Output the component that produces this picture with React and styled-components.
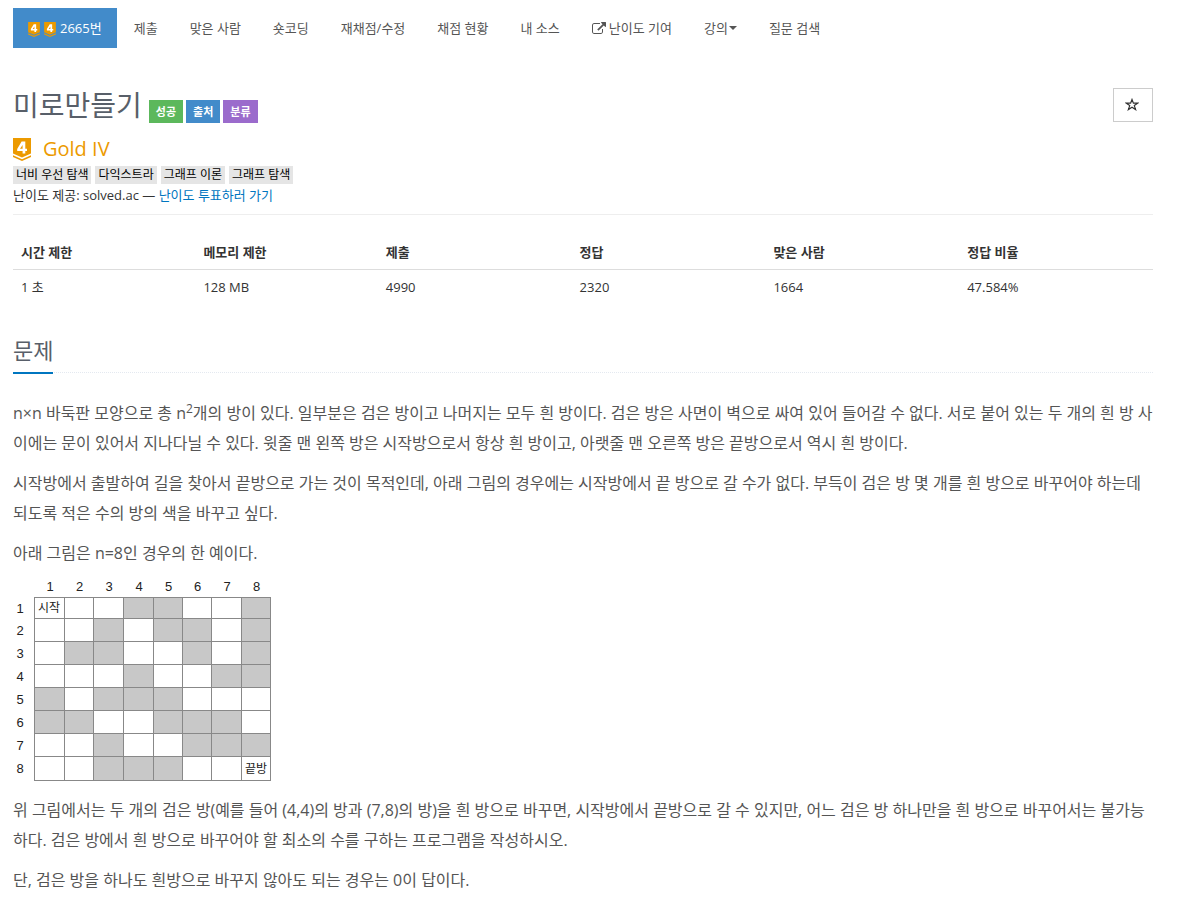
import React from 'react';
import styled, { createGlobalStyle } from 'styled-components';

const GlobalStyle = createGlobalStyle`
  *, *::before, *::after { box-sizing: border-box; }
  body {
    margin: 0;
    background: #fff;
    color: #333;
    font: 13px/20px "Open Sans", "Noto Sans CJK KR", sans-serif;
  }
  a { text-decoration: none; color: inherit; }
`;

const Page = styled.main`
  padding: 8px 24px 0 13px;
`;

const Nav = styled.nav`
  display: flex;
  flex-wrap: wrap;
  gap: 2px;
`;

const NavLink = styled.a`
  display: flex;
  align-items: center;
  gap: ${(p) => p.$gap || 3}px;
  padding: 10px 15px;
  white-space: nowrap;
  color: ${(p) => (p.$active ? '#fff' : '#555')};
  background: ${(p) => (p.$active ? '#428bca' : 'transparent')};
`;

const Badges = styled.span`
  display: flex;
  gap: 4px;
  padding-top: 2px;
`;

const Caret = styled.span`
  border: 4px solid transparent;
  border-top-color: currentColor;
  border-bottom: 0;
`;

const Header = styled.header`
  display: flex;
  justify-content: space-between;
  align-items: flex-start;
  margin-top: 40px;
`;

const TitleRow = styled.div`
  display: flex;
  align-items: flex-end;
  gap: 7px;
`;

const Title = styled.h1`
  margin: 0;
  font-size: 28px;
  line-height: 35px;
  font-weight: 400;
  color: #585f69;
`;

const Labels = styled.div`
  display: flex;
  gap: 3px;
`;

const Label = styled.span`
  padding: 2px 7px 1px;
  font-size: 11px;
  font-weight: 700;
  color: #fff;
  background: ${(p) => p.$color};
`;

const StarButton = styled.button`
  display: flex;
  align-items: center;
  justify-content: center;
  width: 40px;
  height: 34px;
  padding: 0 2px 2px 0;
  color: #333;
  background: #fff;
  border: 1px solid #ccc;
`;

const Tier = styled.div`
  display: flex;
  align-items: center;
  gap: 12px;
  margin-top: 12px;
  font-size: 20px;
  line-height: 28px;
  color: #ec9a00;
`;

const Tags = styled.div`
  display: flex;
  gap: 4px;
  margin-top: 3px;
`;

const Tag = styled.a`
  padding: 0 3px;
  font-size: 12px;
  line-height: 18px;
  color: #000;
  background: #e5e5e5;
`;

const Provider = styled.p`
  margin: 1px 0 9px;
  a { color: #0076c0; }
`;

const Rule = styled.hr`
  margin: 0 0 20px;
  border: 0;
  border-top: 1px solid #eee;
`;

const InfoTable = styled.table`
  width: 100%;
  table-layout: fixed;
  border-collapse: collapse;
  line-height: 18px;
  th, td {
    width: 17%;
    padding: 8px;
    text-align: left;
  }
  th:nth-child(-n + 2) { width: 16%; }
  th { border-bottom: 1px solid #ddd; }
`;

const Headline = styled.div`
  display: flex;
  margin: 30px 0 25px;
  border-bottom: 1px dotted #e4e9f0;
`;

const HeadlineText = styled.h2`
  margin: 0 0 -2px;
  padding-bottom: 6px;
  font-size: 22px;
  line-height: 32px;
  font-weight: 400;
  color: #585f69;
  border-bottom: 2px solid #0076c0;
`;

const Body = styled.section`
  font-size: 16px;
  line-height: 30px;
  color: #555;
  p { margin: 0 0 10px; }
  sup { font-size: 12px; line-height: 0; }
`;

const Figure = styled.figure`
  margin: 0 0 13px;
  svg { display: block; }
`;

function TierIcon({ width }) {
  return (
    <svg width={width} height={Math.round((width * 23) / 18)} viewBox="0 0 18 23" role="img" aria-label="Gold IV">
      <path d="M0 0H18V15.600L9 19.600L0 15.600Z" fill="#ec9a00" />
      <path d="M0 17.200L9 21.200L18 17.200V19L9 23L0 19Z" fill="#ec9a00" />
      <path d="M8.600 3.600H12.300V10.800H14V13H12.300V15.400H9.600V13H4.200V10.900ZM9.600 10.800V6.900L7 10.800Z" fill="#fff" fillRule="evenodd" />
    </svg>
  );
}

function ExternalIcon() {
  return (
    <svg width="14" height="12" viewBox="0 0 1792 1536" fill="currentColor" aria-hidden="true">
      <path d="M1408 928v320q0 119-84.500 203.500T1120 1536H288q-119 0-203.500-84.500T0 1248V416q0-119 84.500-203.500T288 128h704q14 0 23 9t9 23v64q0 14-9 23t-23 9H288q-66 0-113 47t-47 113v832q0 66 47 113t113 47h832q66 0 113-47t47-113V928q0-14 9-23t23-9h64q14 0 23 9t9 23zm384-864v512q0 26-19 45t-45 19-45-19l-176-176-652 652q-10 10-23 10t-23-10L695 983q-10-10-10-23t10-23l652-652-176-176q-19-19-19-45t19-45 45-19h512q26 0 45 19t19 45z" />
    </svg>
  );
}

function StarIcon() {
  return (
    <svg width="14" height="13" viewBox="0 0 14 13" fill="none" stroke="currentColor" strokeWidth="1.2" aria-hidden="true">
      <path d="M7 1.500L8.400 5.200H12.600L9.300 7.600L10.600 11.600L7 9.200L3.400 11.600L4.700 7.600L1.400 5.200H5.600Z" />
    </svg>
  );
}

const MAZE = ['00011001', '00101101', '01100101', '00010011', '10111000', '11001110', '00100111', '00111000'];
const COLS = [21, 51, 80, 110, 140, 169, 198, 228, 257];
const ROWS = [19, 40, 63, 86, 109, 132, 155, 178, 202];

function Maze() {
  return (
    <svg width="260" height="204" viewBox="0 0 260 204" fontFamily='"Liberation Sans", "Noto Sans CJK KR", sans-serif' fontSize="13" textAnchor="middle" fill="#222">
      {MAZE.map((row, y) =>
        [...row].map((cell, x) => (
          <rect
            key={`${x}-${y}`}
            x={COLS[x] + 0.5}
            y={ROWS[y] + 0.5}
            width={COLS[x + 1] - COLS[x]}
            height={ROWS[y + 1] - ROWS[y]}
            fill={cell === '1' ? '#c8c8c8' : '#fff'}
            stroke="#888"
          />
        ))
      )}
      {MAZE.map((_, i) => (
        <React.Fragment key={i}>
          <text x={(COLS[i] + COLS[i + 1]) / 2 + 1} y="13">{i + 1}</text>
          <text x="7" y={(ROWS[i] + ROWS[i + 1]) / 2 + 5}>{i + 1}</text>
        </React.Fragment>
      ))}
      <text x="36" y="34" fontSize="12">시작</text>
      <text x="243" y="195" fontSize="12">끝방</text>
    </svg>
  );
}

const LINKS = ['제출', '맞은 사람', '숏코딩', '재채점/수정', '채점 현황', '내 소스'];
const TAGS = ['너비 우선 탐색', '다익스트라', '그래프 이론', '그래프 탐색'];
const INFO = [
  ['시간 제한', '1 초'],
  ['메모리 제한', '128 MB'],
  ['제출', '4990'],
  ['정답', '2320'],
  ['맞은 사람', '1664'],
  ['정답 비율', '47.584%'],
];

export default function App() {
  return (
    <>
      <GlobalStyle />
      <Page>
        <Nav>
          <NavLink href="#problem" $active $gap={4}>
            <Badges>
              <TierIcon width={12} />
              <TierIcon width={12} />
            </Badges>
            2665번
          </NavLink>
          {LINKS.map((text) => (
            <NavLink key={text} href="#nav">{text}</NavLink>
          ))}
          <NavLink href="#nav"><ExternalIcon />난이도 기여</NavLink>
          <NavLink href="#nav" $gap={1}>강의<Caret /></NavLink>
          <NavLink href="#nav">질문 검색</NavLink>
        </Nav>

        <Header>
          <TitleRow>
            <Title>미로만들기</Title>
            <Labels>
              <Label $color="#5cb85c">성공</Label>
              <Label $color="#428bca">출처</Label>
              <Label $color="#9b6bcc">분류</Label>
            </Labels>
          </TitleRow>
          <StarButton type="button" aria-label="즐겨찾기"><StarIcon /></StarButton>
        </Header>

        <Tier><TierIcon width={18} />Gold IV</Tier>
        <Tags>
          {TAGS.map((tag) => (
            <Tag key={tag} href="#tag">{tag}</Tag>
          ))}
        </Tags>
        <Provider>난이도 제공: solved.ac — <a href="#vote">난이도 투표하러 가기</a></Provider>
        <Rule />

        <InfoTable>
          <thead>
            <tr>{INFO.map(([name]) => <th key={name} scope="col">{name}</th>)}</tr>
          </thead>
          <tbody>
            <tr>{INFO.map(([name, value]) => <td key={name}>{value}</td>)}</tr>
          </tbody>
        </InfoTable>

        <Headline><HeadlineText>문제</HeadlineText></Headline>
        <Body>
          <p>n×n 바둑판 모양으로 총 n<sup>2</sup>개의 방이 있다. 일부분은 검은 방이고 나머지는 모두 흰 방이다. 검은 방은 사면이 벽으로 싸여 있어 들어갈 수 없다. 서로 붙어 있는 두 개의 흰 방 사이에는 문이 있어서 지나다닐 수 있다. 윗줄 맨 왼쪽 방은 시작방으로서 항상 흰 방이고, 아랫줄 맨 오른쪽 방은 끝방으로서 역시 흰 방이다.</p>
          <p>시작방에서 출발하여 길을 찾아서 끝방으로 가는 것이 목적인데, 아래 그림의 경우에는 시작방에서 끝 방으로 갈 수가 없다. 부득이 검은 방 몇 개를 흰 방으로 바꾸어야 하는데 되도록 적은 수의 방의 색을 바꾸고 싶다.</p>
          <p>아래 그림은 n=8인 경우의 한 예이다.</p>
          <Figure><Maze /></Figure>
          <p>위 그림에서는 두 개의 검은 방(예를 들어 (4,4)의 방과 (7,8)의 방)을 흰 방으로 바꾸면, 시작방에서 끝방으로 갈 수 있지만, 어느 검은 방 하나만을 흰 방으로 바꾸어서는 불가능하다. 검은 방에서 흰 방으로 바꾸어야 할 최소의 수를 구하는 프로그램을 작성하시오.</p>
          <p>단, 검은 방을 하나도 흰방으로 바꾸지 않아도 되는 경우는 0이 답이다.</p>
        </Body>
      </Page>
    </>
  );
}
